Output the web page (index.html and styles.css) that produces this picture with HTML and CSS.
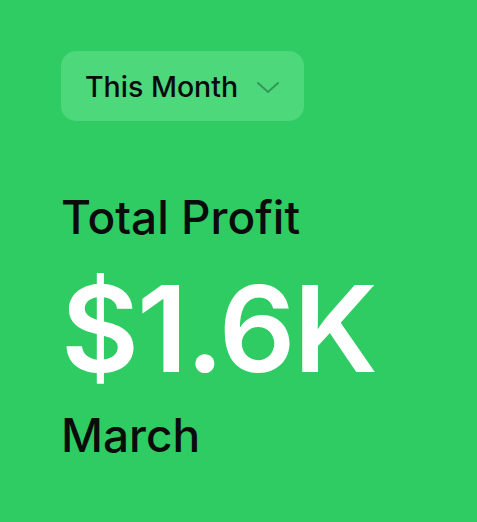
FILE: index.html
```html
<!DOCTYPE html>
<html lang="en">
<head>
    <meta charset="UTF-8">
    <title>Total Profit</title>
    <link rel="stylesheet" href="styles.css">
</head>
<body>
<div class="profit-card">
    <button class="period-select">
        <span>This Month</span>
        <svg class="chevron" width="24" height="13" viewBox="0 0 24 13">
            <path d="M2 2 L12 11 L22 2" fill="none" stroke="currentColor" stroke-width="2" stroke-linecap="round" stroke-linejoin="round"/>
        </svg>
    </button>
    <div class="profit-label">Total Profit</div>
    <div class="profit-value">$1.6K</div>
    <div class="profit-month">March</div>
</div>
</body>
</html>
```

FILE: styles.css
```css
html, body {
    margin: 0;
    height: 100%;
}

body {
    background-color: #2ecc62;
    font-family: Inter, "Noto Sans", sans-serif;
    color: #0b0b0b;
}

.profit-card {
    display: flex;
    flex-direction: column;
    align-items: flex-start;
    padding: 51px 0 0 61px;
}

.period-select {
    box-sizing: border-box;
    display: flex;
    align-items: center;
    gap: 18px;
    height: 70px;
    width: 243px;
    padding: 0 24px;
    border: none;
    border-radius: 15px;
    background: #4dd87c;
    font-family: inherit;
    font-size: 28.5px;
    font-weight: 500;
    white-space: nowrap;
    color: #0b0b0b;
    cursor: pointer;
}

.chevron {
    flex-shrink: 0;
    color: rgba(0, 0, 0, 0.3);
    margin-top: 2px;
}

.profit-label {
    margin-top: 68px;
    font-size: 46px;
    font-weight: 500;
    line-height: 56px;
}

.profit-value {
    margin-top: 24px;
    font-size: 120px;
    font-weight: 600;
    line-height: 120px;
    color: #fff;
    letter-spacing: -2px;
}

.profit-month {
    margin-top: 18px;
    font-size: 46px;
    font-weight: 500;
    line-height: 56px;
}
```
